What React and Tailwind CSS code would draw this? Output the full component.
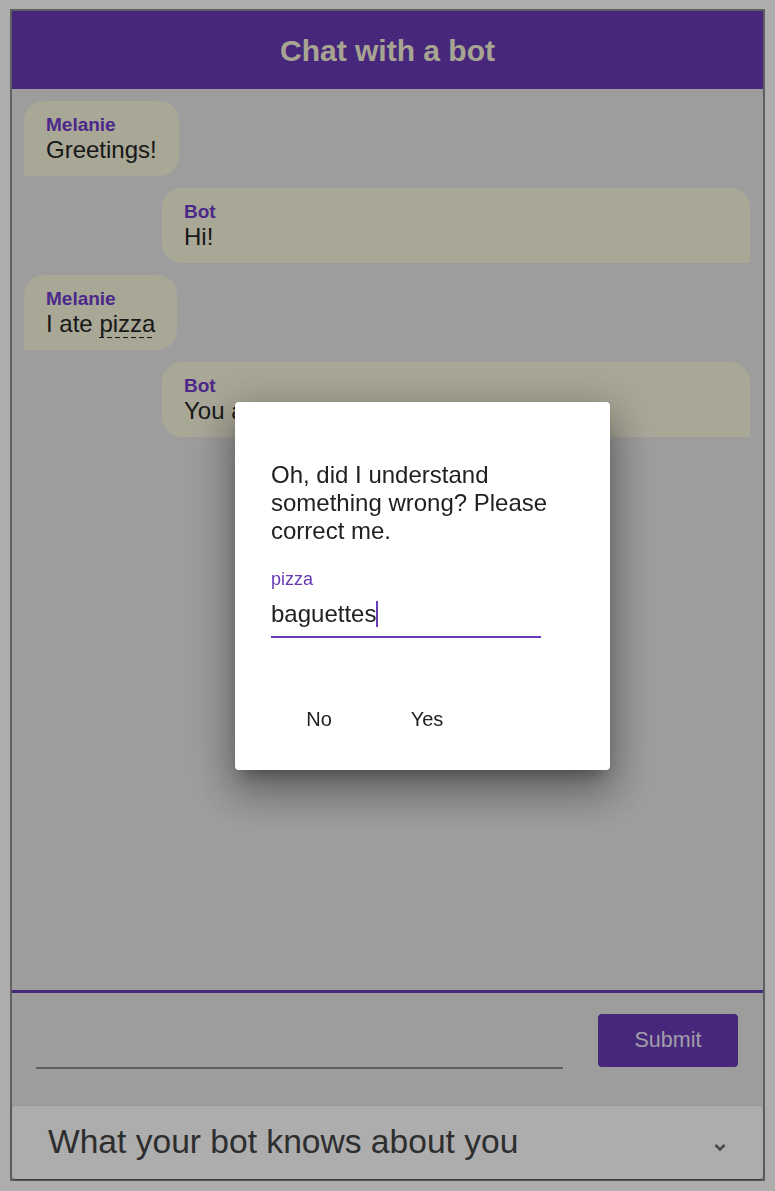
const messages = [
    { from: 'Melanie', text: 'Greetings!', user: true },
    { from: 'Bot', text: 'Hi!' },
    { from: 'Melanie', text: 'I ate ', mark: 'pizza', user: true },
    { from: 'Bot', text: 'You ate pizza' },
];

function Bubble({ msg }) {
    return (
        <div
            className={
                msg.user
                    ? 'self-start mr-[150px] rounded-[20px] rounded-bl-none bg-[#f9f6de] px-[22px] py-3'
                    : 'ml-[138px] mr-[1px] rounded-[20px] rounded-br-none bg-[#f9f6de] px-[22px] py-3'
            }
        >
            <div className="text-[19px] leading-[23px] font-bold text-[#6f3ccc]">{msg.from}</div>
            <div className="text-[24px] leading-[28px] text-[#262626]">
                {msg.text}
                {msg.mark && (
                    <span className="pb-[1px] bg-[linear-gradient(to_right,#222_60%,transparent_60%)] bg-[length:8px_1px] bg-repeat-x bg-bottom">
                        {msg.mark}
                    </span>
                )}
            </div>
        </div>
    );
}

export default function App() {
    return (
        <div className="min-h-[1191px] bg-white px-[10px] pt-[9px] font-['Liberation_Sans',Arial,sans-serif]">
            <div className="h-[1172px] flex flex-col border-2 border-[#8c8c8c] bg-[#e7e7e7]">
                <header className="h-[78px] shrink-0 flex items-center justify-center bg-[#673ab7]">
                    <h1 className="text-[30px] font-bold text-[#f8f2d8]">Chat with a bot</h1>
                </header>

                <div className="flex-1 flex flex-col gap-3 pt-3 px-3">
                    {messages.map((m, i) => (
                        <Bubble key={i} msg={m} />
                    ))}
                </div>

                <div className="h-[3px] shrink-0 bg-[#673ab7]" />

                <div className="h-[113px] shrink-0 flex items-start gap-[35px] pt-[21px] pl-[24px] pr-[25px]">
                    <div className="flex-1 h-[55px] border-b-[2px] border-[#8c8c8c]" />
                    <button className="w-[140px] h-[53px] rounded-[4px] bg-[#673ab7] text-[21.5px] text-[#ede7f6]">
                        Submit
                    </button>
                </div>

                <div className="h-[73px] shrink-0 flex items-center justify-between rounded-[4px] bg-white pl-[36px] pr-[31px] shadow-[0_2px_1px_-1px_rgba(0,0,0,0.2),0_1px_1px_0_rgba(0,0,0,0.14),0_1px_3px_0_rgba(0,0,0,0.12)]">
                    <span className="text-[33.6px] text-[#444]">What your bot knows about you</span>
                    <svg viewBox="0 0 24 24" className="w-6 h-6 mt-[9px] fill-none stroke-[#6e6e6e] stroke-[2.6]">
                        <path d="M7.5 10 12 14.5 16.5 10" />
                    </svg>
                </div>
            </div>

            <div className="fixed inset-0 bg-black/[0.32]">
                <div className="absolute left-[235px] top-[402px] w-[375px] h-[368px] rounded-[4px] bg-white shadow-[0_11px_15px_-7px_rgba(0,0,0,0.3),0_24px_38px_3px_rgba(0,0,0,0.22),0_9px_46px_8px_rgba(0,0,0,0.2)]">
                    <div className="pt-[59px] px-[36px]">
                        <p className="text-[24px] leading-[28px] text-[#212121]">
                            Oh, did I understand something wrong? Please correct me.
                        </p>
                        <div className="mt-[24px] w-[270px]">
                            <div className="text-[18px] leading-[21px] text-[#673ab7]">pizza</div>
                            <div className="mt-[10px] pb-[8px] border-b-2 border-[#673ab7] text-[24px] leading-[28px] text-[#212121]">
                                baguettes
                                <span className="inline-block w-[2px] h-[26px] bg-[#673ab7] align-[-5px]" />
                            </div>
                        </div>
                    </div>
                    <div className="mt-[63px] pl-[40px] flex gap-[20px]">
                        <button className="w-[88px] h-[36px] text-[20px] text-[#212121]">No</button>
                        <button className="w-[88px] h-[36px] text-[20px] text-[#212121]">Yes</button>
                    </div>
                </div>
            </div>
        </div>
    );
}
